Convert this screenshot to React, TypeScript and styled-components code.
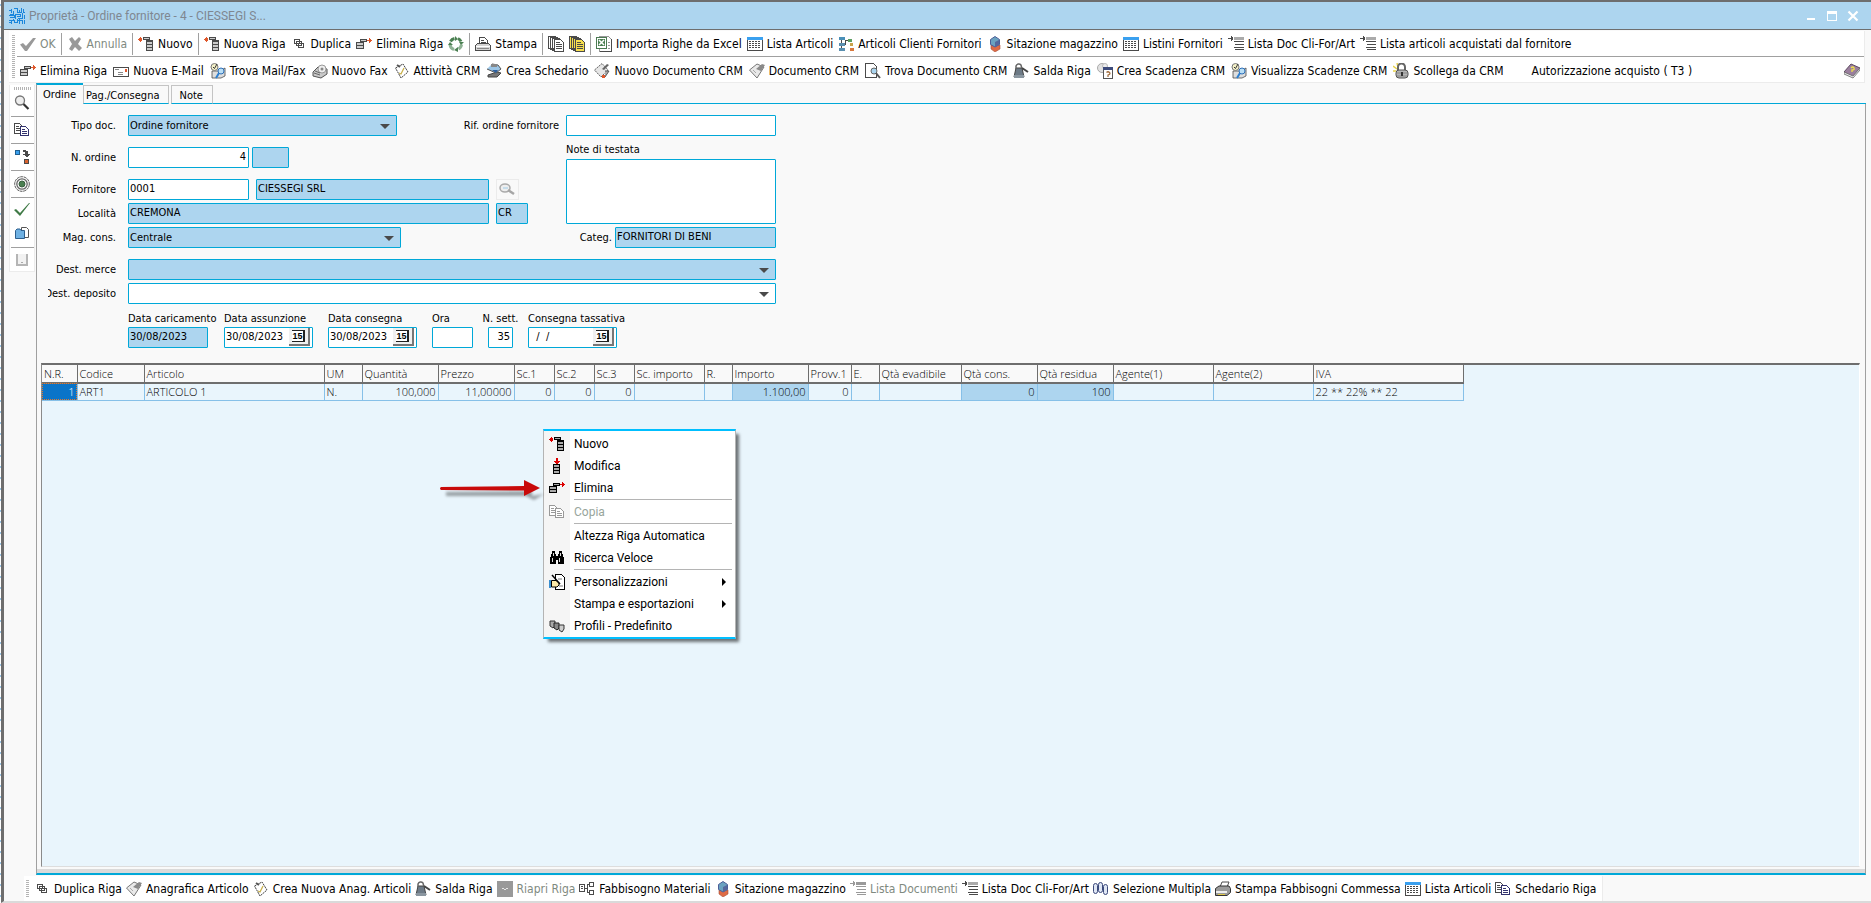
import React from "react";
import styled, { createGlobalStyle, css } from "styled-components";

const color = {
  cyan: "#00a8d8",
  field: "#add5ef",
  frame: "#6e6e6e",
  page: "#f9f9f9",
  rule: "#a0a0a0",
  grid: "#e9f5fc",
  gridLine: "#86c0e8",
};

const GlobalStyle = createGlobalStyle`
  * { box-sizing: border-box; }
  body { margin: 0; background: ${color.page}; }
  button, input, select, textarea { font: inherit; color: inherit; }
`;

/* ---------- icons ---------- */

const Svg = styled.svg`
  display: block;
  flex: none;
  width: 16px;
  height: 16px;
`;

const D = "#4a4a4a";

const icons: Record<string, React.ReactNode> = {
  check: <path d="M0 8.500 3 7l3 3 7-8h3L7 15H5z" fill="#999" />,
  cross: <path d="M2 3 5 1l3 4 4-4 2 2-3 5 4 4-3 3-4-4-3 4-3-2 3-5z" fill="#999" />,
  newRow: (
    <g shapeRendering="crispEdges">
      <path d="M0 3h4v1H0zM2 1h1v5H2zM1 2h1v3H1zM3 2h1v3H3z" fill="#e0582c" />
      <path d="M5 1h7v3H5zM8 4h7v11H8z" fill={D} />
      <path d="M6 2h5v1H6zM9 6h5v2H9zM9 9h5v2H9zM9 12h5v2H9z" fill="#ccc" />
    </g>
  ),
  newRowRed: (
    <g shapeRendering="crispEdges">
      <path d="M0 3h4v1H0zM2 1h1v5H2zM1 2h1v3H1zM3 2h1v3H3z" fill="#d00" />
      <path d="M5 1h7v3H5zM8 4h7v11H8z" fill="#000" />
      <path d="M6 2h5v1H6zM9 6h5v2H9zM9 9h5v2H9zM9 12h5v2H9z" fill="#aaa" />
    </g>
  ),
  editRow: (
    <g shapeRendering="crispEdges">
      <path d="M7 0h2v3H7zM5 3h6v1H5zM6 4h4v1H6zM7 5h2v1H7z" fill="#d00" />
      <path d="M4 6h7v10H4z" fill="#000" />
      <path d="M5 7h5v2H5zM5 10h5v2H5zM5 13h5v2H5z" fill="#aaa" />
    </g>
  ),
  delRow: (
    <g shapeRendering="crispEdges">
      <path d="M4 3h7v3H8v7H0V6h4z" fill={D} />
      <path d="M5 4h5v1H5zM1 7h6v2H1zM1 10h6v2H1z" fill="#ccc" />
      <path d="M11 4h5v1h-5zM13 2h1v5h-1zM14 3h1v3h-1z" fill="#e0582c" />
    </g>
  ),
  delRowRed: (
    <g shapeRendering="crispEdges">
      <path d="M4 3h7v3H8v7H0V6h4z" fill="#000" />
      <path d="M5 4h5v1H5zM1 7h6v2H1zM1 10h6v2H1z" fill="#aaa" />
      <path d="M11 4h5v1h-5zM13 2h1v5h-1zM14 3h1v3h-1z" fill="#d00" />
    </g>
  ),
  duplicate: (
    <g shapeRendering="crispEdges" fill="#fff" stroke={D}>
      <path d="M3.500 3.500h5v4h-5zM5.500 5.500h5v4h-5zM7.500 7.500h5v4h-5z" />
    </g>
  ),
  recycle: (
    <g fill="none" strokeWidth="3">
      <path d="M2.500 5.500a6 6 0 0 1 4-3M10 2.500a6 6 0 0 1 3 3" stroke="#4b8052" />
      <path d="M13.500 8.500a6 6 0 0 1-3 4.500M6 13.500a6 6 0 0 1-4-5" stroke="#8fb295" />
      <path d="M7 0v5l3-2zM16 6h-5l2 3zM10 11v5l-4-2zM0 9h5L2 6z" fill="#4b8052" />
    </g>
  ),
  printer: (
    <g shapeRendering="crispEdges">
      <path d="M4.500 8V1.500h5l3 3V8" fill="#fff" stroke={D} />
      <path d="M6 4h3v1H6zM6 6h5v1H6z" fill={D} />
      <path d="M.5 9.500l2-2h11l2 2v5H.5z" fill="#d4d4d4" stroke={D} />
      <path d="M1 10h14v1H1z" fill="#fff" />
      <path d="M2 12h12v1H2z" fill="#888" />
    </g>
  ),
  printerColor: (
    <g>
      <path d="M5 6 7 1h7l-2 5" fill="#fff" stroke={D} />
      <path d="M.5 7.500 4 5h10l1.500 2.500v4L12 14.500H.5z" fill="#9a9a9a" stroke="#333" />
      <path d="M1 10h11v2H1z" fill="#eee" />
      <path d="M3 13h7v1H3z" fill="#dfc84a" />
    </g>
  ),
  pages: (
    <g shapeRendering="crispEdges" stroke={D} fill="#fff">
      <path d="M.5.500h7v12h-7zM2.500 1.500h7v12h-7zM4.500 2.500h7v12h-7z" />
      <path d="M6.500 3.500h6l3 3v9h-9z" />
      <path d="M8 6.500h4M8 8.500h6M8 10.500h6M8 12.500h6" fill="none" />
    </g>
  ),
  pagesYellow: (
    <g shapeRendering="crispEdges" stroke={D} fill="#f7df4e">
      <path d="M.5.500h7v12h-7zM2.500 1.500h7v12h-7zM4.500 2.500h7v12h-7z" />
      <path d="M6.500 3.500h6l3 3v9h-9z" />
      <path d="M8 6.500h4M8 8.500h6M8 10.500h6M8 12.500h6" fill="none" />
    </g>
  ),
  excel: (
    <g shapeRendering="crispEdges">
      <path d="M3.500.500h9l3 3v12h-12z" fill="#fff" stroke="#999" />
      <path d="M15.500 3v12.500H4" fill="none" stroke={D} />
      <path d="M.5 1.500h10v11H.5z" fill="#fff" stroke="#4b7a52" />
      <path d="M2 3h7v7H2z" fill="#4b8052" />
      <path d="m3 4 5 5M8 4 3 9" stroke="#fff" strokeWidth="1.500" shapeRendering="auto" />
      <path d="M12 6h2v1h-2zM12 9h2v1h-2zM12 12h2v1h-2z" fill="#999" />
    </g>
  ),
  table: (
    <g shapeRendering="crispEdges">
      <path d="M.5 1.500h15v13H.5z" fill="#fff" stroke={D} />
      <path d="M0 1h16v3H0z" fill="#3aa0ef" />
      <path d="M2 5.500h12M2 7.500h12M2 9.500h12M2 11.500h12" stroke={D} strokeDasharray="2 1" />
    </g>
  ),
  tree: (
    <g shapeRendering="crispEdges">
      <path d="M3.500 3v11M3.500 8.500h4M7.500 4v5M8 4.500h6" stroke={D} fill="none" />
      <path d="M1 1h6v3H1z" fill="#4a90b8" />
      <path d="M1 7h6v3H1zM1 12h6v3H1z" fill="#5a8fb0" />
      <path d="M10 3h4v3h-4z" fill="#5d9e63" />
      <path d="M12 7h3v3h-3z" fill="#c9a34b" />
      <path d="M12 12h4v3h-4z" fill="#d9783e" />
    </g>
  ),
  cubes: (
    <g>
      <path d="M8 8l5 1v4l-5 3-4-3V9z" fill="#df6b45" stroke="#a8503a" strokeWidth=".6" />
      <path d="M8 .5l4.500 3v5L8 11 3.500 8.500v-5z" fill="#6aa2c0" stroke="#4c5f98" />
      <path d="M8 6v5l4-2V4z" fill="#55689c" />
    </g>
  ),
  listDoc: (
    <g shapeRendering="crispEdges">
      <path d="M0 2h5v1H0zM3 0h1v5H3zM4 1h1v3H4z" fill={D} />
      <path d="M6 1h10v3H6z" fill="#aaa" />
      <path d="M6 5h10v1H6zM7 8h9v1H7zM6 11h10v1H6zM7 13h9v1H7z" fill={D} />
    </g>
  ),
  listDocOff: (
    <g shapeRendering="crispEdges" fill="#999">
      <path d="M0 2h5v1H0zM3 0h1v5H3zM4 1h1v3H4z" />
      <path d="M6 1h10v3H6zM6 5h10v1H6zM7 8h9v1H7zM6 11h10v1H6zM7 13h9v1H7z" />
    </g>
  ),
  mail: (
    <g shapeRendering="crispEdges">
      <path d="M.5 4.500h15v9H.5z" fill="#fff" stroke={D} />
      <path d="M12 6h2v3h-2z" fill="#e0582c" />
      <path d="M2 6h4v1H2zM5 9h5v1H5zM5 11h5v1H5z" fill="#888" />
    </g>
  ),
  findMail: (
    <g>
      <path d="M2 8h8l5-3v8l-4 2H2z" fill="#ddd" stroke={D} strokeWidth=".8" />
      <circle cx="4.500" cy="4" r="3.500" fill="#f4f1c8" stroke="#777" />
      <path d="M3 4l1.500 1.500L7 1" fill="none" stroke="#333" />
      <circle cx="11" cy="8" r="3" fill="#b9def5" stroke="#2d6fb8" />
      <path d="M9 10l-3 5" stroke="#2d7fd0" strokeWidth="2" />
    </g>
  ),
  fax: (
    <g>
      <path d="M1 9l5-5 9 2v5l-6 4-8-2z" fill="#c9c9c9" stroke="#555" />
      <circle cx="10" cy="6" r="4" fill="#eee" stroke="#999" />
      <circle cx="10" cy="6" r="1.500" fill="#888" />
      <path d="M2 10l6 2M3 8l5 2" stroke="#666" />
    </g>
  ),
  clip: (
    <g>
      <path d="M1.500 5 9 1l5 8-7 6z" fill="#fff" stroke="#444" strokeDasharray="2 .7" />
      <path d="M5 10l2 1 3-6" stroke="#c9b14a" strokeWidth="1.300" fill="none" />
      <path d="M3 2l3 2" stroke="#555" strokeWidth="2" />
    </g>
  ),
  schedario: (
    <g>
      <path d="M2 14h9l4-4-4-1-9 3z" fill="#777" stroke="#444" />
      <path d="M1 6l9 4 5-4-3-4-6-1" fill="#9bc5e6" stroke="#555" />
      <path d="M6 7l6 0-2 3z" fill="#2d5f9e" />
      <path d="M5 1h6v3H5z" fill="#888" />
    </g>
  ),
  newDoc: (
    <g>
      <path d="M.5 7 8 .5l6 6.500-7 7z" fill="#e6e6e6" stroke="#666" strokeDasharray="2 .7" />
      <path d="M8 6l5-5 2 1-5 5z" fill="#666" />
      <path d="M11 8l4 0-4 6" fill="#aaa" stroke="#555" />
      <path d="M8 12h3v3H8z" fill="#e0582c" />
    </g>
  ),
  doc: (
    <g>
      <path d="M.5 7 8 1l7 3-7 11z" fill="#e9e9e9" stroke="#777" />
      <path d="M7 6l6-5 3 1-4 6z" fill="#8a8a8a" />
      <path d="M4 7l3 3" stroke="#aaa" />
    </g>
  ),
  findDoc: (
    <g>
      <path d="M.5.500h8l3 3v11H.5z" fill="#fff" stroke={D} shapeRendering="crispEdges" />
      <circle cx="9" cy="8" r="3" fill="#a9d4ee" stroke="#666" />
      <path d="M11 10l4 5" stroke="#555" strokeWidth="2" />
    </g>
  ),
  salda: (
    <g>
      <path d="M1 14l2-9h6l2 9z" fill="#6d7a86" stroke="#444" />
      <path d="M3 6V3a3 3 0 0 1 5-1l1 4" fill="none" stroke="#666" strokeWidth="1.500" />
      <path d="M9 5l6 4" stroke="#444" strokeWidth="2" />
      <path d="M1 12h10v3H1z" fill="#8a96a0" />
    </g>
  ),
  deadline: (
    <g>
      <circle cx="5" cy="5" r="4.500" fill="#e2e2e2" stroke="#aaa" />
      <circle cx="8" cy="3" r="2.500" fill="#ededed" stroke="#bbb" />
      <g shapeRendering="crispEdges">
        <path d="M6.500 5.500h9v10h-9z" fill="#fff" stroke="#555" />
        <path d="M6 4h10v3H6z" fill="#3c4a7c" />
      </g>
      <path d="M9.500 9.500q1.500-1.500 3 0t-1.500 2.500v2" fill="none" stroke="#a06a3a" strokeWidth="1.200" />
    </g>
  ),
  lock: (
    <g>
      <path d="M0 3l4 3M4 0l1 4M0 8h3" stroke="#e8d24a" strokeWidth="1.500" />
      <path d="M5 8V4a3.500 3.500 0 0 1 7 0v4" fill="none" stroke="#666" strokeWidth="2" />
      <rect x="3" y="7" width="12" height="8" rx="3" fill="#b5b5b5" stroke="#555" />
      <path d="M4 10h10M4 13h10" stroke="#888" />
      <path d="M8 9h2v4H8z" fill="#333" />
    </g>
  ),
  book: (
    <g>
      <path d="M0 9 7 1l9 4-7 9z" fill="#9b7f9e" stroke="#5d4960" />
      <path d="M0 9v2l9 4 7-8V5l-7 8z" fill="#eee" stroke="#666" strokeWidth=".8" />
      <path d="M7 5q2-2 3 0t-2 2v2" fill="none" stroke="#f0e04a" strokeWidth="1.300" />
    </g>
  ),
  magnifier: (
    <g>
      <circle cx="6" cy="5.500" r="4.500" fill="#eee" stroke="#777" strokeWidth="1.300" />
      <path d="M9.500 9l5 5" stroke="#333" strokeWidth="2.200" />
    </g>
  ),
  findOff: (
    <g>
      <ellipse cx="6" cy="6" rx="5" ry="4" fill="#eee" stroke="#aaa" strokeWidth="1.500" />
      <path d="M4 6h5" stroke="#b9d7ea" strokeWidth="1.500" />
      <path d="M9 8l6 4" stroke="#a6a6a6" strokeWidth="2.500" />
    </g>
  ),
  copy: (
    <g shapeRendering="crispEdges" fill="#fff">
      <path d="M.5 1.500h5l3 3v7h-8z" stroke={D} />
      <path d="M2 4.500h3M2 6.500h4M2 8.500h4" stroke={D} />
      <path d="M6.500 4.500h5l3 3v6h-8z" stroke="#33336f" />
      <path d="M8 7.500h3M8 9.500h5M8 11.500h5" stroke="#33336f" />
    </g>
  ),
  copyOff: (
    <g shapeRendering="crispEdges" fill="#fff" stroke="#999">
      <path d="M.5 1.500h5l3 3v7h-8zM2 4.500h3M2 6.500h4M2 8.500h4" />
      <path d="M6.500 4.500h5l3 3v6h-8zM8 7.500h3M8 9.500h5M8 11.500h5" />
    </g>
  ),
  move: (
    <g shapeRendering="crispEdges">
      <path d="M1.500 1.500h4v4h-4z" fill="#3aa0ef" stroke="#1f5f90" />
      <path d="M9 1h3v1h2v3h2v1h-1v1h-1v1h-2V7h-1V6H9V5h2V3H9z" fill={D} />
      <path d="M10.500 10.500h4v4h-4z" fill="#d9622e" stroke={D} />
    </g>
  ),
  target: (
    <g fill="none">
      <circle cx="8" cy="8" r="7.300" stroke="#555" strokeDasharray="3 .6" />
      <circle cx="8" cy="8" r="5.200" stroke="#666" strokeWidth="1.300" />
      <circle cx="8" cy="8" r="3" fill="#4b8052" stroke="#3a5f40" />
    </g>
  ),
  tick: <path d="M0 8l2-1 4 4 9-10h1L6 14z" fill="#3f7a46" />,
  folder: (
    <g>
      <path d="M7.500 1.500h5l2 2v8h-7z" fill="#fff" stroke="#555" />
      <path d="M1.500 4.500 3 3h3l1 1.500h3.500v8h-9z" fill="#6fb1e3" stroke="#2d5f8e" />
    </g>
  ),
  brackets: (
    <g shapeRendering="crispEdges">
      <path d="M2 2h12v12H2z" fill="#f2f2f2" />
      <path d="M2 2h2v10h9V2h1v12H2zM12 2h1v10h-1z" fill="#b5b5b5" />
      <path d="M7 10h2v1H7z" fill="#aaa" />
    </g>
  ),
  grayBox: (
    <g shapeRendering="crispEdges">
      <path d="M0 0h16v16H0z" fill="#999" />
      <path d="M5 7h2v1H5zM7 8h2v1H7zM9 7h2v1H9z" fill="#e5e5e5" />
    </g>
  ),
  materials: (
    <g shapeRendering="crispEdges" fill="#fff" stroke={D}>
      <path d="M.5 3.500h5v7h-5zM2 5.500h2M2 7.500h2M6 7.500h2M8.500 3v9M8 3.500h3M8 11.500h3" />
      <path d="M10.500 1.500h4v4h-4zM10.500 9.500h4v4h-4z" />
    </g>
  ),
  multi: (
    <g fill="#dfe6f4" stroke="#3c4a7c">
      <rect x=".5" y="2.500" width="4" height="10" rx="2" />
      <rect x="5.500" y="1.500" width="4" height="10" rx="2" />
      <rect x="10.500" y="3.500" width="4" height="10" rx="2" />
    </g>
  ),
  binoculars: (
    <g shapeRendering="crispEdges">
      <path d="M3 1h3v3h1v2h2V4h1V1h3v3h1v3h1v7H9v-4H7v4H1V7h1V4h1z" fill="#000" />
      <path d="M4 3h1v3H4zM3 8h1v4H3zM11 3h1v3h-1zM10 8h1v4h-1z" fill="#ddd" />
    </g>
  ),
  personal: (
    <g>
      <path d="M6.500.500h6l3 3v12h-9z" fill="#fff" stroke="#000" shapeRendering="crispEdges" />
      <path d="M0 6h2v8H0z" fill="#3a8fd0" />
      <path d="M2.500 6.500H7l3 2.500v2l-2 2H2.500z" fill="#fbe9a8" stroke="#000" />
      <path d="M3 1l8 9" stroke="#000" strokeWidth="1.500" />
      <path d="M9 5h4M10 12h4" stroke="#777" />
    </g>
  ),
  profiles: (
    <g>
      <path d="M1 3h5v5l-2 2-3-2z" fill="#aaa" stroke="#333" />
      <path d="M5 5h5v5l-2 2-3-2z" fill="#888" stroke="#222" />
      <path d="M10 7h5v4l-2 3-3-2z" fill="#ccc" stroke="#333" />
    </g>
  ),
  app: (
    <g fill="none" stroke="#1a86dc" shapeRendering="crispEdges">
      <path d="M0 2.500h3M2.500 1v4M5 .5h3v4M4.500 3v3H1M7.500 4.500h3v-3M12.500 0v4h-2M14.500 1v3h2M0 7.500h5v2H1M6.500 6v5M6 6.500h5v2H8M13.500 5v5H9M15.500 7v4M0 12.500h4v-2M2.500 12v4M5 14.500h3v-4M5.500 12v3M10.500 11v5M9 12.500h4v3M15.500 12v4h-2M0 14.500h2" />
    </g>
  ),
};

const Icon = ({ name }: { name: string }) => (
  <Svg viewBox="0 0 16 16" aria-hidden="true">
    {icons[name]}
  </Svg>
);

/* ---------- window frame ---------- */

const Backdrop = styled.div`
  min-height: 100vh;
  display: flex;
  padding-left: 1px;
  background: repeating-linear-gradient(#fff 0 4px, #9cc8ea 4px 6px, #fff 6px 11px);
`;

const Frame = styled.main`
  flex: 1;
  min-width: 0;
  display: flex;
  flex-direction: column;
  background: ${color.page};
  border-top: 2px solid ${color.frame};
  border-left: 3px solid ${color.frame};
  border-bottom: 2px solid #dadada;
  font: 12px/16px "DejaVu Sans Condensed", "Liberation Sans", sans-serif;
  color: #000;
`;

const TitleBar = styled.header`
  display: flex;
  align-items: center;
  height: 28px;
  padding: 0 10px 0 5px;
  gap: 4px;
  background: #add5ef;
  border-bottom: 1px solid ${color.frame};
`;

const Title = styled.h1`
  flex: 1;
  margin: 0;
  font: 12px/16px Roboto, "Noto Sans", sans-serif;
  color: #7f8791;
`;

const WindowButton = styled.button`
  width: 16px;
  height: 16px;
  margin-left: 1px;
  padding: 2px;
  border: 0;
  background: none;
  svg {
    width: 12px;
    height: 12px;
  }
`;

/* ---------- tool bars ---------- */

const ToolPanel = styled.div`
  display: flex;
  margin: 1px 6px 0 5px;
  padding: 0 0 0 3px;
  background: #fff;
  border-right: 1px solid #ececec;
  border-bottom: 1px solid #ececec;
`;

const Grip = styled.i<{ $flat?: boolean }>`
  flex: none;
  ${(p) =>
    p.$flat
      ? css`
          width: 17px;
          height: 3px;
          background: repeating-linear-gradient(90deg, #b4b4b4 0 1px, #fff 1px 2px);
        `
      : css`
          width: 3px;
          margin: 4px 0;
          background: repeating-linear-gradient(#b4b4b4 0 1px, #fff 1px 2px);
        `}
`;

const ToolRows = styled.div`
  flex: 1;
  min-width: 0;
`;

const ToolRow = styled.div<{ $gap: number; $place?: "upper" | "lower" }>`
  display: flex;
  align-items: center;
  height: ${(p) => (p.$place === "upper" ? 26 : 25)}px;
  margin-left: 2px;
  padding: ${(p) => (p.$place === "lower" ? 2 : 0)}px 4px 0 3px;
  gap: ${(p) => p.$gap}px;
  ${(p) => p.$place === "upper" && `border-bottom: 1px solid ${color.rule};`}
`;

const ToolButton = styled.button`
  display: flex;
  align-items: center;
  gap: 4px;
  padding: 0;
  border: 0;
  background: none;
  white-space: nowrap;
  &:disabled {
    color: #7f8a7f;
  }
`;

const Divider = styled.i`
  width: 1px;
  height: 22px;
  background: ${color.rule};
`;

const Spacer = styled.i`
  flex: 1;
`;

const Lead = styled.i`
  width: 16px;
`;

type Tool = { icon?: string; label?: string; off?: boolean; hint?: string };

const row1: (Tool | "|")[] = [
  { icon: "check", label: "OK", off: true },
  "|",
  { icon: "cross", label: "Annulla", off: true },
  "|",
  { icon: "newRow", label: "Nuovo" },
  "|",
  { icon: "newRow", label: "Nuova Riga" },
  { icon: "duplicate", label: "Duplica" },
  { icon: "delRow", label: "Elimina Riga" },
  { icon: "recycle", hint: "Aggiorna" },
  "|",
  { icon: "printer", label: "Stampa" },
  "|",
  { icon: "pages", hint: "Copia documento" },
  { icon: "pagesYellow", hint: "Incolla documento" },
  "|",
  { icon: "excel", label: "Importa Righe da Excel" },
  { icon: "table", label: "Lista Articoli" },
  { icon: "tree", label: "Articoli Clienti Fornitori" },
  { icon: "cubes", label: "Sitazione magazzino" },
  { icon: "table", label: "Listini Fornitori" },
  { icon: "listDoc", label: "Lista Doc Cli-For/Art" },
  { icon: "listDoc", label: "Lista articoli acquistati dal fornitore" },
];

const row2: Tool[] = [
  { icon: "delRow", label: "Elimina Riga" },
  { icon: "mail", label: "Nuova E-Mail" },
  { icon: "findMail", label: "Trova Mail/Fax" },
  { icon: "fax", label: "Nuovo Fax" },
  { icon: "clip", label: "Attività CRM" },
  { icon: "schedario", label: "Crea Schedario" },
  { icon: "newDoc", label: "Nuovo Documento CRM" },
  { icon: "doc", label: "Documento CRM" },
  { icon: "findDoc", label: "Trova Documento CRM" },
  { icon: "salda", label: "Salda Riga" },
  { icon: "deadline", label: "Crea Scadenza CRM" },
  { icon: "findMail", label: "Visualizza Scadenze CRM" },
  { icon: "lock", label: "Scollega da CRM" },
];

const bottomTools: Tool[] = [
  { icon: "duplicate", label: "Duplica Riga" },
  { icon: "doc", label: "Anagrafica Articolo" },
  { icon: "clip", label: "Crea Nuova Anag. Articoli" },
  { icon: "salda", label: "Salda Riga" },
  { icon: "grayBox", label: "Riapri Riga", off: true },
  { icon: "materials", label: "Fabbisogno Materiali" },
  { icon: "cubes", label: "Sitazione magazzino" },
  { icon: "listDocOff", label: "Lista Documenti", off: true },
  { icon: "listDoc", label: "Lista Doc Cli-For/Art" },
  { icon: "multi", label: "Selezione Multipla" },
  { icon: "printerColor", label: "Stampa Fabbisogni Commessa" },
  { icon: "table", label: "Lista Articoli" },
  { icon: "copy", label: "Schedario Riga" },
];

const Tools = ({ items }: { items: (Tool | "|")[] }) => (
  <>
    {items.map((t, i) =>
      t === "|" ? (
        <Divider key={i} />
      ) : (
        <ToolButton key={i} disabled={t.off} aria-label={t.hint}>
          {t.icon && <Icon name={t.icon} />}
          {t.label}
        </ToolButton>
      )
    )}
  </>
);

/* ---------- body ---------- */

const Body = styled.div`
  flex: 1;
  display: flex;
`;

const SideBar = styled.nav`
  align-self: flex-start;
  flex: none;
  display: flex;
  flex-direction: column;
  align-items: center;
  width: 26px;
  margin: 2px 1px 0 5px;
  padding-top: 2px;
  background: #fff;
  border: 1px solid #ececec;
  border-top: 0;
`;

const SideButton = styled.button<{ $rule?: boolean }>`
  display: flex;
  align-items: center;
  justify-content: center;
  width: 23px;
  height: ${(p) => (p.$rule ? 27 : 23)}px;
  padding: 0;
  border: 0;
  background: none;
  ${(p) => p.$rule && `border-bottom: 1px solid ${color.rule};`}
`;

const Workspace = styled.div`
  flex: 1;
  min-width: 0;
  display: flex;
  flex-direction: column;
  margin-right: 5px;
`;

const Tabs = styled.div`
  display: flex;
  align-items: flex-end;
  height: 21px;
`;

const Tab = styled.button<{ $active?: boolean }>`
  height: 19px;
  margin-right: 2px;
  padding: 2px 9px 0 2px;
  border: 1px solid #c4c4c4;
  border-bottom: 1px solid ${color.cyan};
  background: ${color.page};
  font-size: 11px;
  line-height: 16px;
  &:nth-child(3) {
    padding: 2px 9px 0 7px;
  }
  ${(p) =>
    p.$active &&
    css`
      height: 21px;
      margin-right: 0;
      padding: 0 7px 0 6px;
      border: 0;
      border-top: 2px solid ${color.cyan};
      border-left: 1px solid ${color.rule};
    `}
`;

const TabLine = styled.i`
  flex: 1;
  height: 1px;
  margin-left: -2px;
  background: ${color.cyan};
`;

const Panel = styled.section`
  flex: 1;
  display: flex;
  flex-direction: column;
  padding: 11px 5px 0 4px;
  border-left: 1px solid ${color.rule};
  border-right: 1px solid ${color.rule};
  border-bottom: 2px solid ${color.cyan};
  font-size: 11px;
  line-height: 14px;
`;

const Form = styled.form`
  display: flex;
  flex-direction: column;
  gap: 11px;
  width: 728px;
  margin-left: 7px;
`;

const Group = styled.div`
  display: flex;
  flex-direction: column;
  gap: 3px;
`;

const Between = styled.div`
  display: flex;
  justify-content: space-between;
  align-items: flex-start;
`;

const LeftStack = styled.div`
  display: flex;
  flex-direction: column;
  gap: 11px;
  padding-top: 8px;
`;

const NoteStack = styled.div`
  display: flex;
  flex-direction: column;
  gap: 2px;
  width: 210px;
  padding-top: 4px;
`;

const Line = styled.div<{ $gap?: number }>`
  display: flex;
  align-items: center;
  gap: ${(p) => p.$gap ?? 7}px;
`;

const Label = styled.label<{ $lead?: boolean }>`
  white-space: nowrap;
  ${(p) =>
    p.$lead &&
    css`
      display: flex;
      justify-content: flex-end;
      width: 68px;
      margin-right: 5px;
      overflow: hidden;
    `}
`;

const fieldBox = css<{ $w?: number; $shaded?: boolean }>`
  width: ${(p) => (p.$w ? `${p.$w}px` : "100%")};
  height: 21px;
  border: 1px solid ${color.cyan};
  border-radius: 1px;
  background: ${(p) => (p.$shaded ? color.field : "#fff")};
`;

const Field = styled.input<{ $w?: number; $shaded?: boolean; $right?: boolean }>`
  ${fieldBox}
  padding: 0 1px 2px;
  outline: 0;
  ${(p) => p.$right && "text-align: right; padding-right: 2px;"}
`;

const Memo = styled.textarea`
  display: block;
  width: 100%;
  height: 65px;
  border: 1px solid ${color.cyan};
  border-radius: 1px;
  background: #fff;
  resize: none;
  outline: 0;
`;

const SelectBox = styled.span<{ $w?: number; $shaded?: boolean }>`
  position: relative;
  display: block;
  flex: ${(p) => (p.$w ? "none" : "1")};
  ${fieldBox}
  &::after {
    content: "";
    position: absolute;
    right: 6px;
    top: 8px;
    border: 5px solid transparent;
    border-top-color: ${D};
    border-bottom: 0;
    pointer-events: none;
  }
  select {
    appearance: none;
    display: block;
    width: 100%;
    height: 19px;
    padding: 0 20px 0 1px;
    border: 0;
    background: none;
    outline: 0;
  }
`;

const FindButton = styled.button`
  width: 23px;
  height: 21px;
  padding: 2px;
  border: 1px solid #ebebeb;
  background: ${color.page};
`;

const DateRow = styled.div`
  display: flex;
  align-items: flex-end;
  gap: 15px;
  margin-top: -4px;
  padding-left: 80px;
`;

const DateCol = styled.div<{ $w: number; $center?: boolean }>`
  display: flex;
  flex-direction: column;
  gap: 1px;
  width: ${(p) => p.$w}px;
  padding-top: 1px;
  ${(p) => p.$center && "align-items: center;"}
`;

const DateBox = styled.span<{ $w?: number; $shaded?: boolean }>`
  display: flex;
  align-items: flex-start;
  ${fieldBox}
  input {
    flex: 1;
    min-width: 0;
    height: 17px;
    padding: 0 1px;
    border: 0;
    background: none;
    outline: 0;
  }
`;

const CalendarButton = styled.button`
  width: 21px;
  height: 18px;
  margin-right: 2px;
  padding: 2px 3px;
  border: 0;
  border-right: 2px solid #777;
  border-bottom: 2px solid #777;
  background: #f0f0f0;
  b {
    display: block;
    width: 13px;
    height: 12px;
    border: 2px solid #222;
    border-width: 1px 2px 1px 0;
    background: #fff;
    font: bold 9px/10px "Liberation Sans", sans-serif;
  }
`;

const DateInput = ({ id, value }: { id: string; value: string }) => (
  <DateBox $w={89}>
    <input id={id} defaultValue={value} />
    <CalendarButton type="button" aria-label="Calendario">
      <b>15</b>
    </CalendarButton>
  </DateBox>
);

/* ---------- rows grid ---------- */

const GridBox = styled.div`
  position: relative;
  flex: 1;
  margin: 15px 0 2px;
  border: 1px solid #8a8a8a;
  border-top: 2px solid ${color.frame};
  border-right-color: #fff;
  border-bottom-color: #ddd;
  background: ${color.grid};
`;

const PanelFoot = styled.div`
  height: 4px;
  margin: 0 -5px 0 -4px;
  background: #dadada;
`;

const Table = styled.table`
  table-layout: fixed;
  width: 1421px;
  border-collapse: collapse;
  font: 300 11px/14px "Open Sans", "Noto Sans", sans-serif;
  th,
  td {
    padding: 0 2px;
    overflow: hidden;
    white-space: nowrap;
    font-weight: 300;
  }
  th {
    height: 18px;
    text-align: left;
    background: ${color.page};
    border-right: 1px solid ${color.frame};
    border-bottom: 2px solid ${color.frame};
  }
`;

const Cell = styled.td<{ $kind?: string }>`
  height: 17px;
  text-align: ${(p) => (p.$kind ? "right" : "left")};
  border-right: 1px solid ${color.gridLine};
  border-bottom: 1px solid ${color.gridLine};
  ${(p) => p.$kind === "shade" && `background: ${color.field};`}
  ${(p) =>
    p.$kind === "sel" &&
    `background: #0a74c8; color: #fff; outline: 1px dotted #e07a30; outline-offset: -1px;`}
`;

const columns: [string, number, string, string?][] = [
  ["N.R.", 35, "1", "sel"],
  ["Codice", 67, "ART1"],
  ["Articolo", 180, "ARTICOLO 1"],
  ["UM", 38, "N."],
  ["Quantità", 76, "100,000", "num"],
  ["Prezzo", 76, "11,00000", "num"],
  ["Sc.1", 40, "0", "num"],
  ["Sc.2", 40, "0", "num"],
  ["Sc.3", 40, "0", "num"],
  ["Sc. importo", 70, ""],
  ["R.", 28, ""],
  ["Importo", 76, "1.100,00", "shade"],
  ["Provv.1", 43, "0", "num"],
  ["E.", 28, ""],
  ["Qtà evadibile", 82, ""],
  ["Qtà cons.", 76, "0", "shade"],
  ["Qtà residua", 76, "100", "shade"],
  ["Agente(1)", 100, ""],
  ["Agente(2)", 100, ""],
  ["IVA", 150, "22 ** 22% ** 22"],
];

/* ---------- context menu ---------- */

const Menu = styled.div`
  position: absolute;
  left: 501px;
  top: 64px;
  width: 193px;
  padding-top: 2px;
  background: linear-gradient(90deg, #f5f5f5 26px, #fff 26px);
  border-top: 2px solid #00bfff;
  border-bottom: 2px solid #00bfff;
  border-left: 1px solid #b4b4b4;
  border-right: 1px solid #b4b4b4;
  box-shadow: 4px 4px 3px -1px #00000088;
  font: 12px/16px Roboto, "Noto Sans", sans-serif;
`;

const MenuItem = styled.button`
  display: flex;
  align-items: center;
  gap: 9px;
  width: 100%;
  height: 22px;
  padding: 0 9px 0 5px;
  border: 0;
  background: none;
  text-align: left;
  &:disabled {
    color: #98a59c;
  }
`;

const MenuRule = styled.hr`
  height: 1px;
  margin: 0 3px 1px 30px;
  border: 0;
  background: #b4b4b4;
`;

const IconSlot = styled.i`
  flex: none;
  width: 16px;
`;

const SubArrow = styled.i`
  margin-left: auto;
  border: 4px solid transparent;
  border-left-color: #000;
  border-right: 0;
`;

const menu: ({ icon?: string; label: string; off?: boolean; sub?: boolean } | "|")[] = [
  { icon: "newRowRed", label: "Nuovo" },
  { icon: "editRow", label: "Modifica" },
  { icon: "delRowRed", label: "Elimina" },
  "|",
  { icon: "copyOff", label: "Copia", off: true },
  "|",
  { label: "Altezza Riga Automatica" },
  { icon: "binoculars", label: "Ricerca Veloce" },
  "|",
  { icon: "personal", label: "Personalizzazioni", sub: true },
  { label: "Stampa e esportazioni", sub: true },
  { icon: "profiles", label: "Profili - Predefinito" },
];

const Pointer = styled.svg`
  position: absolute;
  left: 396px;
  top: 112px;
  width: 110px;
  height: 26px;
`;

const BottomBar = styled.footer`
  align-self: flex-start;
  display: flex;
  margin: 1px 0 0 20px;
  padding: 0 2px 0 2px;
  background: #fff;
  border-right: 1px solid #ececec;
`;

export default function App() {
  return (
    <Backdrop>
      <GlobalStyle />
      <Frame>
        <TitleBar>
          <Icon name="app" />
          <Title>Proprietà - Ordine fornitore - 4 - CIESSEGI S...</Title>
          <WindowButton aria-label="Riduci">
            <Svg viewBox="0 0 12 12">
              <path d="M2 8h8v2H2z" fill="#fff" />
            </Svg>
          </WindowButton>
          <WindowButton aria-label="Ingrandisci">
            <Svg viewBox="0 0 12 12">
              <path d="M1 1h10v10H1zM2 4v6h8V4z" fill="#fff" fillRule="evenodd" />
            </Svg>
          </WindowButton>
          <WindowButton aria-label="Chiudi">
            <Svg viewBox="0 0 12 12">
              <path d="m1.500 1.500 9 9M10.500 1.500l-9 9" stroke="#fff" strokeWidth="2.200" />
            </Svg>
          </WindowButton>
        </TitleBar>

        <ToolPanel>
          <Grip />
          <ToolRows>
            <ToolRow $gap={5} $place="upper">
              <Tools items={row1} />
            </ToolRow>
            <ToolRow $gap={6} $place="lower">
              <Tools items={row2} />
              <Lead />
              <ToolButton>Autorizzazione acquisto ( T3 )</ToolButton>
              <Spacer />
              <ToolButton aria-label="Guida">
                <Icon name="book" />
              </ToolButton>
            </ToolRow>
          </ToolRows>
        </ToolPanel>

        <Body>
          <SideBar>
            <Grip $flat />
            <SideButton $rule aria-label="Cerca">
              <Icon name="magnifier" />
            </SideButton>
            <SideButton $rule aria-label="Copia">
              <Icon name="copy" />
            </SideButton>
            <SideButton $rule aria-label="Sposta">
              <Icon name="move" />
            </SideButton>
            <SideButton $rule aria-label="Centra">
              <Icon name="target" />
            </SideButton>
            <SideButton aria-label="Conferma">
              <Icon name="tick" />
            </SideButton>
            <SideButton $rule aria-label="Cartella">
              <Icon name="folder" />
            </SideButton>
            <SideButton disabled aria-label="Parentesi">
              <Icon name="brackets" />
            </SideButton>
          </SideBar>

          <Workspace>
            <Tabs>
              <Tab $active>Ordine</Tab>
              <Tab>Pag./Consegna</Tab>
              <Tab>Note</Tab>
              <TabLine />
            </Tabs>
            <Panel>
              <Form onSubmit={(e) => e.preventDefault()}>
                <Group>
                  <Between>
                    <Line>
                      <Label $lead htmlFor="tipo">Tipo doc.</Label>
                      <SelectBox $w={269} $shaded>
                        <select id="tipo">
                          <option>Ordine fornitore</option>
                        </select>
                      </SelectBox>
                    </Line>
                    <Line>
                      <Label htmlFor="rif">Rif. ordine fornitore</Label>
                      <Field id="rif" $w={210} />
                    </Line>
                  </Between>
                  <Between>
                    <LeftStack>
                      <Line $gap={3}>
                        <Line>
                          <Label $lead htmlFor="nord">N. ordine</Label>
                          <Field id="nord" $w={121} $right defaultValue="4" />
                        </Line>
                        <Field aria-label="Serie" $w={37} $shaded readOnly />
                      </Line>
                      <Group>
                        <Line>
                          <Label $lead htmlFor="forn">Fornitore</Label>
                          <Field id="forn" $w={121} defaultValue="0001" />
                          <Field aria-label="Ragione sociale" $w={233} $shaded defaultValue="CIESSEGI SRL" />
                          <FindButton type="button" disabled aria-label="Cerca fornitore">
                            <Icon name="findOff" />
                          </FindButton>
                        </Line>
                        <Line>
                          <Label $lead htmlFor="loc">Località</Label>
                          <Field id="loc" $w={361} $shaded defaultValue="CREMONA" />
                          <Field aria-label="Provincia" $w={32} $shaded defaultValue="CR" />
                        </Line>
                      </Group>
                    </LeftStack>
                    <NoteStack>
                      <Label htmlFor="note">Note di testata</Label>
                      <Memo id="note" />
                    </NoteStack>
                  </Between>
                  <Between>
                    <Line>
                      <Label $lead htmlFor="mag">Mag. cons.</Label>
                      <SelectBox $w={273} $shaded>
                        <select id="mag">
                          <option>Centrale</option>
                        </select>
                      </SelectBox>
                    </Line>
                    <Line $gap={3}>
                      <Label htmlFor="cat">Categ.</Label>
                      <Field id="cat" $w={161} $shaded defaultValue="FORNITORI DI BENI" />
                    </Line>
                  </Between>
                </Group>
                <Group>
                  <Line>
                    <Label $lead htmlFor="merce">Dest. merce</Label>
                    <SelectBox $shaded>
                      <select id="merce" />
                    </SelectBox>
                  </Line>
                  <Line>
                    <Label $lead htmlFor="dep">Dest. deposito</Label>
                    <SelectBox>
                      <select id="dep" />
                    </SelectBox>
                  </Line>
                </Group>
                <DateRow>
                  <DateCol $w={81}>
                    <Label htmlFor="d1">Data caricamento</Label>
                    <Field id="d1" $w={80} $shaded defaultValue="30/08/2023" />
                  </DateCol>
                  <DateCol $w={89}>
                    <Label htmlFor="d2">Data assunzione</Label>
                    <DateInput id="d2" value="30/08/2023" />
                  </DateCol>
                  <DateCol $w={89}>
                    <Label htmlFor="d3">Data consegna</Label>
                    <DateInput id="d3" value="30/08/2023" />
                  </DateCol>
                  <DateCol $w={41}>
                    <Label htmlFor="ora">Ora</Label>
                    <Field id="ora" $w={41} />
                  </DateCol>
                  <DateCol $w={25} $center>
                    <Label htmlFor="sett">N. sett.</Label>
                    <Field id="sett" $w={25} $right defaultValue="35" />
                  </DateCol>
                  <DateCol $w={89}>
                    <Label htmlFor="d4">Consegna tassativa</Label>
                    <DateInput id="d4" value="  /  /" />
                  </DateCol>
                </DateRow>
              </Form>

              <GridBox>
                <Table>
                  <colgroup>
                    {columns.map(([name, w]) => (
                      <col key={name} width={w} />
                    ))}
                  </colgroup>
                  <thead>
                    <tr>
                      {columns.map(([name]) => (
                        <th key={name} scope="col">{name}</th>
                      ))}
                    </tr>
                  </thead>
                  <tbody>
                    <tr>
                      {columns.map(([name, , value, kind]) => (
                        <Cell key={name} $kind={kind}>{value}</Cell>
                      ))}
                    </tr>
                  </tbody>
                </Table>
                <Menu role="menu">
                  {menu.map((m, i) =>
                    m === "|" ? (
                      <MenuRule key={i} />
                    ) : (
                      <MenuItem key={i} role="menuitem" disabled={m.off}>
                        {m.icon ? <Icon name={m.icon} /> : <IconSlot />}
                        {m.label}
                        {m.sub && <SubArrow />}
                      </MenuItem>
                    )
                  )}
                </Menu>
                <Pointer viewBox="0 0 110 26" aria-hidden="true">
                  <defs>
                    <filter id="soft" x="-10%" y="-50%" width="120%" height="200%">
                      <feGaussianBlur stdDeviation="1.500" />
                    </filter>
                  </defs>
                  <path d="M8 15l86-1v5l12-2-10 6-8-4H8z" fill="#000" opacity=".35" filter="url(#soft)" />
                  <path d="M3 10q-2 1.500 0 3l83 .5V19l16-8L86 3v6z" fill="#c80a0a" />
                </Pointer>
              </GridBox>
              <PanelFoot />
            </Panel>
          </Workspace>
        </Body>

        <BottomBar>
          <Grip />
          <ToolRow $gap={4}>
            <Tools items={bottomTools} />
          </ToolRow>
        </BottomBar>
      </Frame>
    </Backdrop>
  );
}
